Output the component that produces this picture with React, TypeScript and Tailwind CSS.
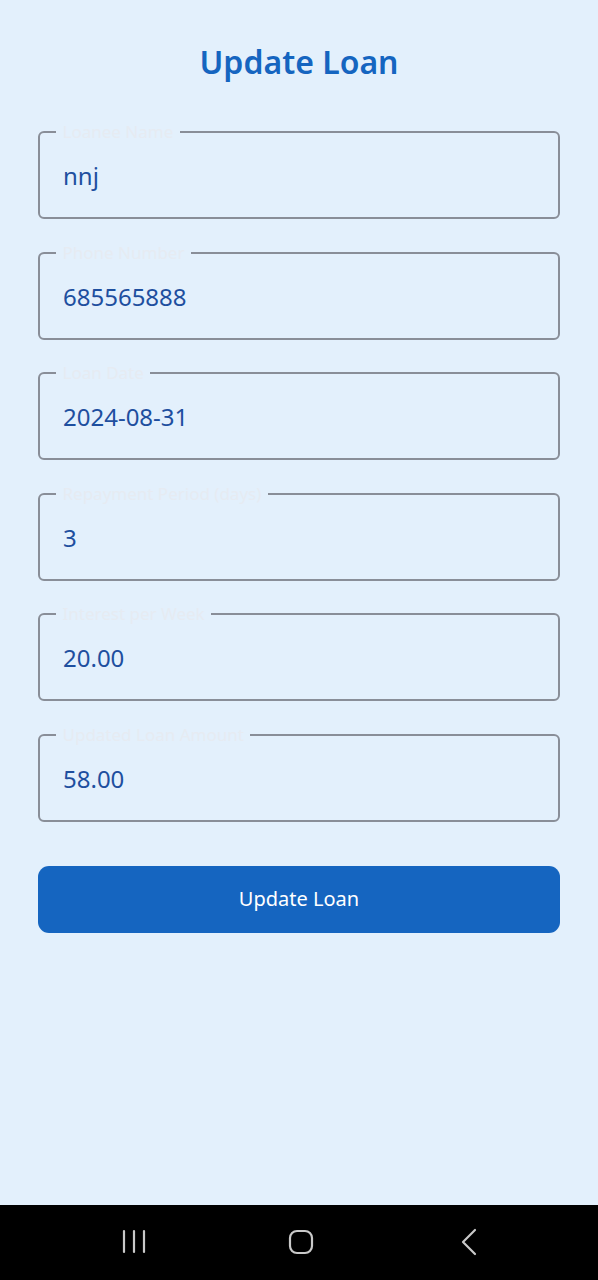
import React from "react";

const fields = [
  { label: "Loanee Name", value: "nnj" },
  { label: "Phone Number", value: "685565888" },
  { label: "Loan Date", value: "2024-08-31" },
  { label: "Repayment Period (days)", value: "3" },
  { label: "Interest per Week", value: "20.00" },
  { label: "Updated Loan Amount", value: "58.00" },
];

export default function App() {
  return (
    <div
      className="flex min-h-[1280px] w-full flex-col"
      style={{ fontFamily: '"Noto Sans", "Open Sans", sans-serif' }}
    >
      <main className="flex flex-1 flex-col bg-[#e3f0fc] px-[38px] pt-[42px]">
        <h1 className="text-center text-[32px] leading-[40px] font-semibold text-[#1565c0]">
          Update Loan
        </h1>
        <form className="mt-[40px] flex flex-col gap-[23.6px]">
          {fields.map((f) => (
            <fieldset
              key={f.label}
              className="m-0 rounded-[6px] border-2 border-[#898e98] px-[16px] pb-[8px] pt-0"
            >
              <legend className="px-[6.5px] text-[17px] leading-[20px] text-[#e6ebf2]">
                {f.label}
              </legend>
              <input
                readOnly
                value={f.value}
                className="block h-[67px] w-full bg-transparent px-[7px] text-[24px] text-[#1e4f9f] outline-none"
              />
            </fieldset>
          ))}
        </form>
        <button className="mt-[44px] h-[67px] w-full rounded-[11px] bg-[#1565c0] text-[20px] text-white">
          Update Loan
        </button>
      </main>
      <nav className="flex h-[75px] items-center bg-black">
        <svg width="598" height="75" viewBox="0 0 598 75" className="block">
          <g stroke="#c9c9c9" strokeWidth="2.2" fill="none" strokeLinecap="round" strokeLinejoin="round">
            <line x1="124" y1="26" x2="124" y2="47" />
            <line x1="134" y1="26" x2="134" y2="47" />
            <line x1="144" y1="26" x2="144" y2="47" />
            <rect x="290" y="26" width="22" height="22" rx="7" />
            <polyline points="475,25 463,37 475,49" />
          </g>
        </svg>
      </nav>
    </div>
  );
}
